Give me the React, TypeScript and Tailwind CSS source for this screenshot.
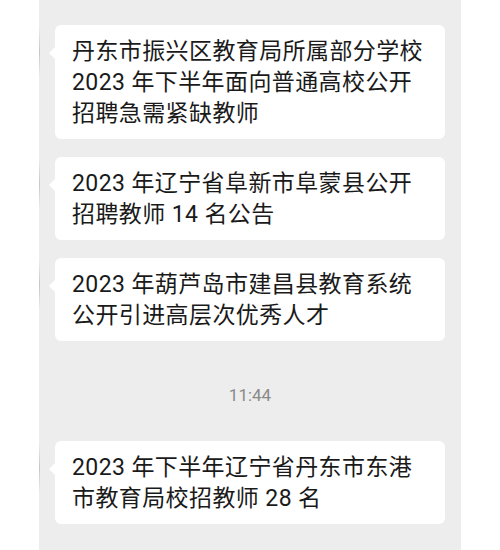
import { Fragment } from 'react';

const messages = [
  ['丹东市振兴区教育局所属部分学校', '2023 年下半年面向普通高校公开', '招聘急需紧缺教师'],
  ['2023 年辽宁省阜新市阜蒙县公开', '招聘教师 14 名公告'],
  ['2023 年葫芦岛市建昌县教育系统', '公开引进高层次优秀人才'],
];

const lastMessage = ['2023 年下半年辽宁省丹东市东港', '市教育局校招教师 28 名'];

function Bubble({ lines, className = '' }: { lines: string[]; className?: string }) {
  return (
    <div className={`flex items-start ${className}`}>
      {/* faint edge mark */}
      <div className="w-px h-[50px] mt-[2px] bg-linear-to-b from-transparent via-[#c6c6c6] to-transparent" />

      {/* tail */}
      <div className="ml-[9px] mt-[22px] w-0 h-0 border-y-[6px] border-y-transparent border-r-[6px] border-r-white" />

      <div className="w-[390px] bg-white rounded-[6px] pl-[17px] pr-3 pt-[11px] pb-[10px]">
        <p className="text-[23px] leading-[31px] tracking-[0.4px] text-[#1a1a1a] whitespace-nowrap">
          {lines.map((line, i) => (
            <Fragment key={i}>
              {line}
              {i < lines.length - 1 && <br />}
            </Fragment>
          ))}
        </p>
      </div>
    </div>
  );
}

export default function App() {
  return (
    <div
      className="w-[500px] h-[550px] bg-white overflow-hidden"
      style={{ fontFamily: 'Roboto, "Noto Sans CJK SC", sans-serif' }}
    >
      <div className="mx-auto w-[422px] h-full bg-[#ededed] pt-[25px] flex flex-col">
        {messages.map((lines, i) => (
          <Bubble key={i} lines={lines} className={i > 0 ? 'mt-[18px]' : ''} />
        ))}

        <div className="mt-[43px] h-6 flex items-center justify-center text-[17px] text-[#8a8a8a]">
          11:44
        </div>

        <Bubble lines={lastMessage} className="mt-[33px]" />
      </div>
    </div>
  );
}
